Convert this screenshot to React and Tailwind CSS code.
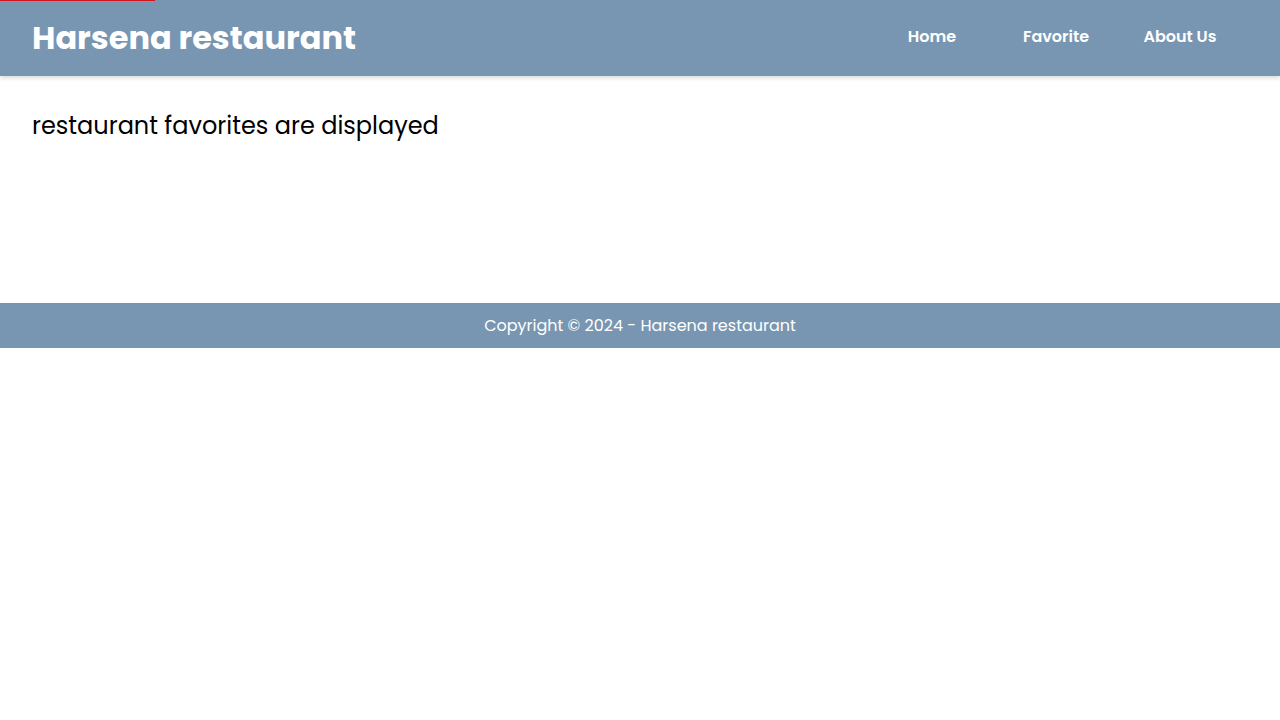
export default function App() {
  const font = { fontFamily: '"Poppins", "Open Sans", "Noto Sans", sans-serif' };
  return (
    <div className="min-h-screen bg-white text-black" style={font}>
      <div className="relative">
        <div className="absolute left-0 top-0 h-px w-[155px] bg-[#d0161f] z-10" />
        <header className="h-[76px] bg-[#7896b2] flex items-center justify-between pl-8 pr-[38px] shadow-[0_2px_4px_rgba(0,0,0,0.15)]">
          <h1 className="text-[32px] font-bold text-white leading-none">Harsena restaurant</h1>
          <nav className="flex -mt-[2px]">
            <a className="w-[124px] text-center text-[16px] font-semibold text-white">Home</a>
            <a className="w-[124px] text-center text-[16px] font-semibold text-white">Favorite</a>
            <a className="w-[124px] text-center text-[16px] font-semibold text-white">About Us</a>
          </nav>
        </header>
      </div>
      <main className="h-[227px] px-8 pt-[32px]">
        <p className="text-[24px] leading-[36px]">restaurant favorites are displayed</p>
      </main>
      <footer className="h-[45px] bg-[#7896b2] flex items-center justify-center">
        <p className="text-[16px] text-white">Copyright © 2024 - Harsena restaurant</p>
      </footer>
    </div>
  );
}
